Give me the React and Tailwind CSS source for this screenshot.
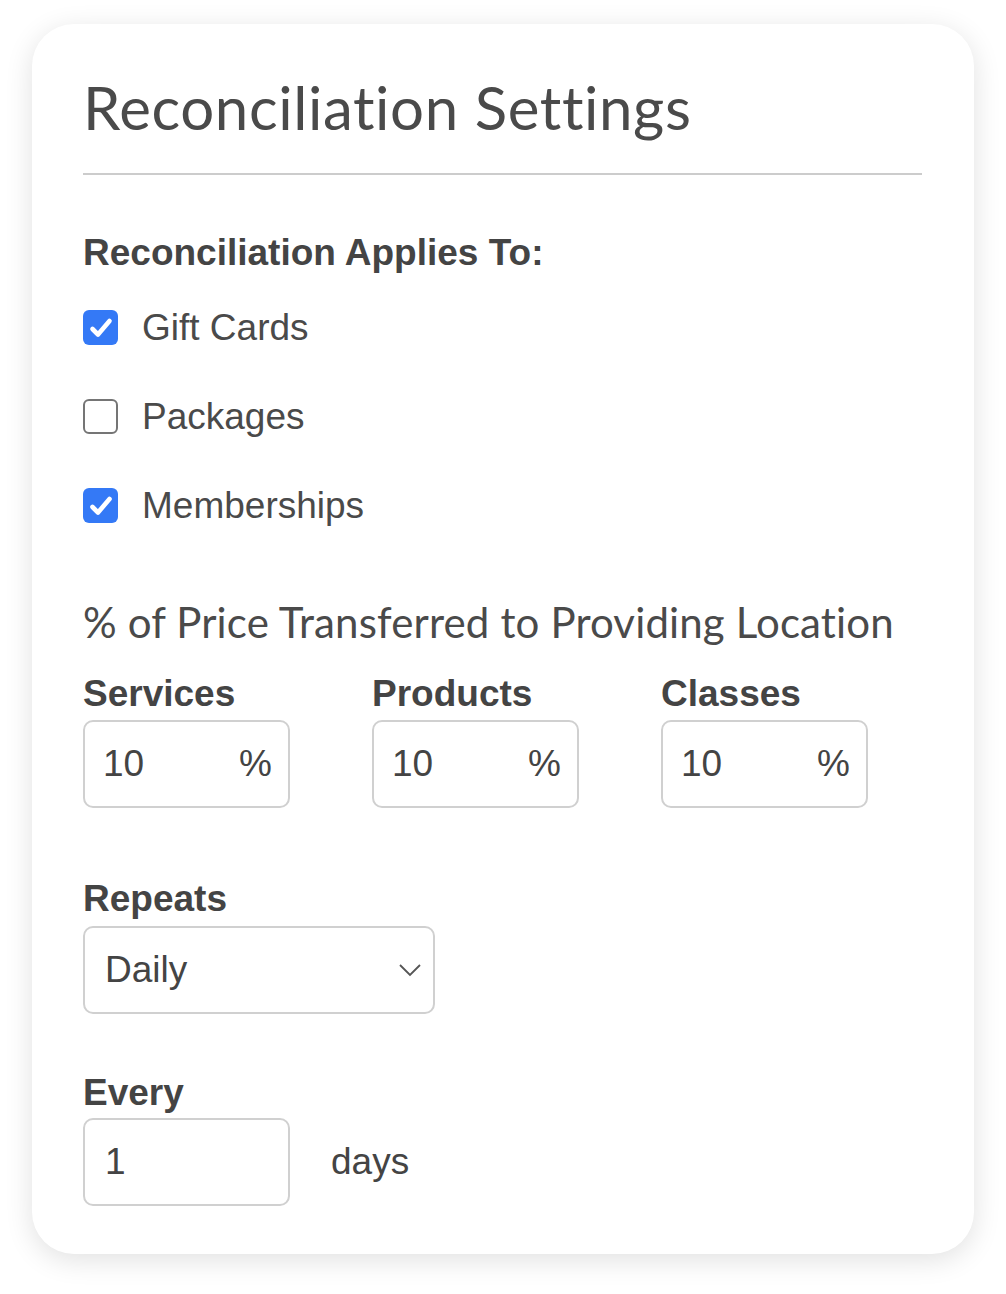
import React from "react";

const Check = ({ checked, label }) => (
  <div className="flex items-center h-[35px]">
    {checked ? (
      <div className="w-[35px] h-[35px] rounded-[6px] bg-[#3479f6] flex items-center justify-center">
        <svg width="28" height="28" viewBox="0 0 28 28" fill="none">
          <path d="M5.5 15l5.5 5.5L22.5 7" stroke="#fff" strokeWidth="4.6" strokeLinecap="round" strokeLinejoin="round" />
        </svg>
      </div>
    ) : (
      <div className="w-[35px] h-[35px] rounded-[6px] border-2 border-[#757575] bg-white" />
    )}
    <span className="ml-[24px] text-[37px] text-[#4a4a4a] leading-[40px]">{label}</span>
  </div>
);

const PercentField = ({ label }) => (
  <div className="w-[289px] shrink-0">
    <div className="text-[37px] font-bold text-[#444] leading-[40px]">{label}</div>
    <div className="mt-[6px] w-[207px] h-[88px] rounded-[10px] border-2 border-[#d0d0d0] flex items-center justify-between pl-[18px] pr-[16px] text-[37px] text-[#444]">
      <span>10</span>
      <span>%</span>
    </div>
  </div>
);

export default function App() {
  return (
    <div className="w-[1006px] h-[1294px] bg-white pt-[24px] pl-[32px]" style={{ fontFamily: '"Liberation Sans", Arial, sans-serif' }}>
      <div className="w-[942px] h-[1230px] bg-white rounded-[42px] shadow-[0_6px_28px_rgba(0,0,0,0.12)] px-[51px] pt-[53px]">
        <h1 className="text-[60px] text-[#4a4a4a] leading-[60px] tracking-[0.6px]" style={{ fontFamily: "Lato, sans-serif" }}>
          Reconciliation Settings
        </h1>
        <div className="mt-[36px] h-[2px] w-[839px] bg-[#cccccc]" />

        <div className="mt-[58px] text-[37px] font-bold text-[#444] leading-[40px]">Reconciliation Applies To:</div>
        <div className="mt-[37px] flex flex-col gap-[54px]">
          <Check checked label="Gift Cards" />
          <Check label="Packages" />
          <Check checked label="Memberships" />
        </div>

        <div className="mt-[78px] text-[42px] text-[#4a4a4a] leading-[42px] tracking-[0.15px]" style={{ fontFamily: "Lato, sans-serif" }}>
          % of Price Transferred to Providing Location
        </div>

        <div className="mt-[31px] flex">
          <PercentField label="Services" />
          <PercentField label="Products" />
          <PercentField label="Classes" />
        </div>

        <div className="mt-[71px] text-[37px] font-bold text-[#444] leading-[40px]">Repeats</div>
        <div className="mt-[7px] w-[352px] h-[88px] rounded-[10px] border-2 border-[#d0d0d0] flex items-center justify-between pl-[20px] pr-[11px] text-[37px] text-[#444]">
          <span>Daily</span>
          <svg width="24" height="14" viewBox="0 0 24 14" fill="none">
            <path d="M2 2l10 10L22 2" stroke="#555" strokeWidth="1.8" />
          </svg>
        </div>

        <div className="mt-[59px] text-[37px] font-bold text-[#444] leading-[40px]">Every</div>
        <div className="mt-[5px] flex items-center">
          <div className="w-[207px] h-[88px] rounded-[10px] border-2 border-[#d0d0d0] flex items-center pl-[20px] text-[37px] text-[#444]">
            1
          </div>
          <span className="ml-[41px] text-[37px] text-[#444]">days</span>
        </div>
      </div>
    </div>
  );
}
